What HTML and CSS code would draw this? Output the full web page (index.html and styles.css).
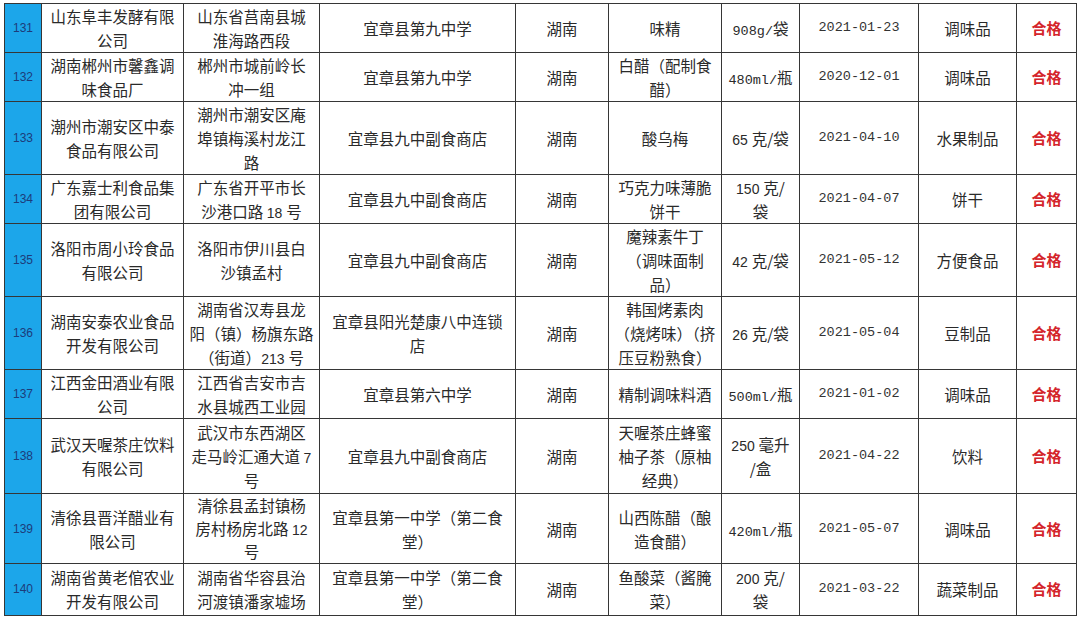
FILE: index.html
```html
<!DOCTYPE html>
<html lang="zh-CN">
<head>
<meta charset="utf-8">
<title>抽检结果</title>
<link rel="stylesheet" href="styles.css">
</head>
<body>
<div class="page">
<table class="grid">
<colgroup>
<col class="c-no"><col class="c-maker"><col class="c-addr"><col class="c-shop"><col class="c-prov"><col class="c-name"><col class="c-spec"><col class="c-date"><col class="c-cat"><col class="c-res">
</colgroup>
<tbody>
<tr><td class="no">131</td><td>山东阜丰发酵有限<br>公司</td><td>山东省莒南县城<br>淮海路西段</td><td>宜章县第九中学</td><td>湖南</td><td>味精</td><td><span class="mono">908g/</span>袋</td><td class="date">2021-01-23</td><td>调味品</td><td class="ok">合格</td></tr>
<tr><td class="no">132</td><td>湖南郴州市馨鑫调<br>味食品厂</td><td>郴州市城前岭长<br>冲一组</td><td>宜章县第九中学</td><td>湖南</td><td>白醋（配制食<br>醋）</td><td><span class="mono">480ml/</span>瓶</td><td class="date">2020-12-01</td><td>调味品</td><td class="ok">合格</td></tr>
<tr><td class="no">133</td><td>潮州市潮安区中泰<br>食品有限公司</td><td>潮州市潮安区庵<br>埠镇梅溪村龙江<br>路</td><td>宜章县九中副食商店</td><td>湖南</td><td>酸乌梅</td><td><span class="lat">65 </span>克/袋</td><td class="date">2021-04-10</td><td>水果制品</td><td class="ok">合格</td></tr>
<tr><td class="no">134</td><td>广东嘉士利食品集<br>团有限公司</td><td>广东省开平市长<br>沙港口路 <span class="lat">18 </span>号</td><td>宜章县九中副食商店</td><td>湖南</td><td>巧克力味薄脆<br>饼干</td><td><span class="lat">150 </span>克/<br>袋</td><td class="date">2021-04-07</td><td>饼干</td><td class="ok">合格</td></tr>
<tr><td class="no">135</td><td>洛阳市周小玲食品<br>有限公司</td><td>洛阳市伊川县白<br>沙镇孟村</td><td>宜章县九中副食商店</td><td>湖南</td><td>魔辣素牛丁<br>（调味面制<br>品）</td><td><span class="lat">42 </span>克/袋</td><td class="date">2021-05-12</td><td>方便食品</td><td class="ok">合格</td></tr>
<tr><td class="no">136</td><td>湖南安泰农业食品<br>开发有限公司</td><td>湖南省汉寿县龙<br>阳（镇）杨旗东路<br>（街道）<span class="lat">213 </span>号</td><td>宜章县阳光楚康八中连锁<br>店</td><td>湖南</td><td>韩国烤素肉<br>（烧烤味）（挤<br>压豆粉熟食）</td><td><span class="lat">26 </span>克/袋</td><td class="date">2021-05-04</td><td>豆制品</td><td class="ok">合格</td></tr>
<tr><td class="no">137</td><td>江西金田酒业有限<br>公司</td><td>江西省吉安市吉<br>水县城西工业园</td><td>宜章县第六中学</td><td>湖南</td><td>精制调味料酒</td><td><span class="mono">500ml/</span>瓶</td><td class="date">2021-01-02</td><td>调味品</td><td class="ok">合格</td></tr>
<tr class="row-tall"><td class="no">138</td><td>武汉天喔茶庄饮料<br>有限公司</td><td>武汉市东西湖区<br>走马岭汇通大道 <span class="lat">7</span><br>号</td><td>宜章县九中副食商店</td><td>湖南</td><td>天喔茶庄蜂蜜<br>柚子茶（原柚<br>经典）</td><td><span class="lat">250 </span>毫升<br>/盒</td><td class="date">2021-04-22</td><td>饮料</td><td class="ok">合格</td></tr>
<tr><td class="no">139</td><td>清徐县晋洋醋业有<br>限公司</td><td class="tight">清徐县孟封镇杨<br>房村杨房北路 <span class="lat">12</span><br>号</td><td>宜章县第一中学（第二食<br>堂）</td><td>湖南</td><td>山西陈醋（酿<br>造食醋）</td><td><span class="mono">420ml/</span>瓶</td><td class="date">2021-05-07</td><td>调味品</td><td class="ok">合格</td></tr>
<tr class="row-pad"><td class="no">140</td><td>湖南省黄老倌农业<br>开发有限公司</td><td>湖南省华容县治<br>河渡镇潘家墟场</td><td>宜章县第一中学（第二食<br>堂）</td><td>湖南</td><td>鱼酸菜（酱腌<br>菜）</td><td><span class="lat">200 </span>克/<br>袋</td><td class="date">2021-03-22</td><td>蔬菜制品</td><td class="ok">合格</td></tr>
</tbody>
</table>
</div>
</body>
</html>
```

FILE: styles.css
```css
html, body {
  margin: 0;
  padding: 0;
  background: #ffffff;
}

.page {
  padding: 3px 0 0 4px;
}

.grid {
  border-collapse: collapse;
  table-layout: fixed;
  width: 1073px;
  font-family: "Noto Sans CJK SC", "Noto Sans CJK TC", sans-serif;
  font-size: 15.5px;
  line-height: 24px;
  color: #2a2a2a;
}

.c-no { width: 37px; }
.c-maker { width: 142px; }
.c-addr { width: 136px; }
.c-shop { width: 196px; }
.c-prov { width: 93px; }
.c-name { width: 113px; }
.c-spec { width: 78px; }
.c-date { width: 119px; }
.c-cat { width: 98px; }
.c-res { width: 60px; }

.grid td {
  border: 1px solid #363636;
  padding: 0 2px;
  text-align: center;
  vertical-align: middle;
  white-space: nowrap;
}

.row-tall td {
  padding-top: 1px;
  padding-bottom: 1px;
}

.row-pad td {
  padding-top: 1px;
  padding-bottom: 2px;
}

.grid td.no {
  background: #1ca6ea;
  color: #1d3c7a;
  font-family: "Liberation Sans", Arial, sans-serif;
  font-size: 12px;
  padding-left: 0;
  padding-right: 0;
}

.grid td.date {
  font-family: "Liberation Mono", monospace;
  font-size: 13.5px;
  color: #333333;
}

.mono {
  font-family: "Liberation Mono", monospace;
  font-size: 13.5px;
  line-height: 1;
}

.lat {
  font-family: "Liberation Sans", Arial, sans-serif;
  font-size: 14px;
  line-height: 1;
}

.grid td.tight {
  line-height: 23px;
}

.grid td.ok {
  color: #d4252b;
  font-weight: 700;
  font-size: 15px;
}
```
